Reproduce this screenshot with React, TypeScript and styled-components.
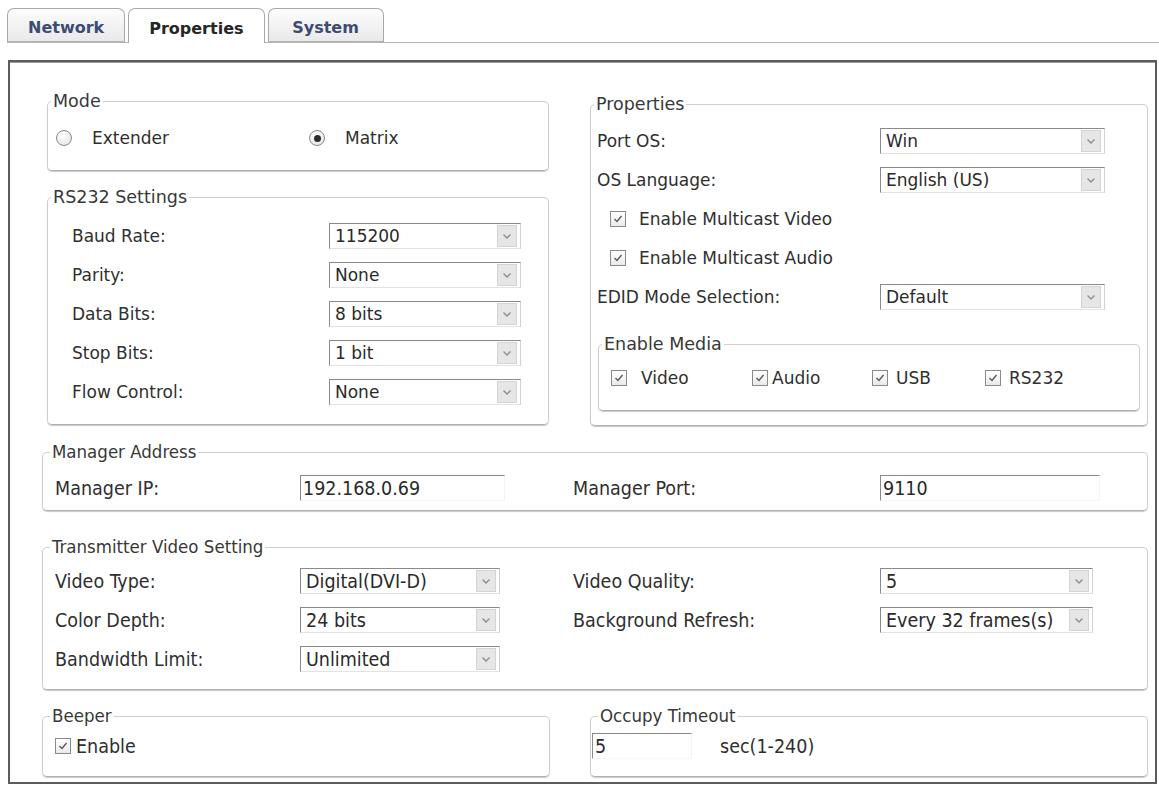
import styled, { createGlobalStyle } from 'styled-components';

const GlobalStyle = createGlobalStyle`
  html, body {
    margin: 0;
    background: #ffffff;
  }
  body {
    font-family: "DejaVu Sans", Verdana, sans-serif;
    color: #2f2f2f;
  }
`;

const Chevron = () => (
  <svg width="10" height="7" viewBox="0 0 10 7">
    <polyline points="1.5,1.5 5,5 8.5,1.5" fill="none" stroke="#8c8c8c" strokeWidth="1.3" />
  </svg>
);

const Check = () => (
  <svg width="12" height="12" viewBox="0 0 12 12">
    <polyline points="2.5,6 5,8.5 9.5,3" fill="none" stroke="#5a5a5a" strokeWidth="1.4" />
  </svg>
);

const Dropdown = ({ value, width }: { value: string; width: number }) => (
  <SelectBox $w={width}>
    <SelectValue>{value}</SelectValue>
    <SelectArrow>
      <Chevron />
    </SelectArrow>
  </SelectBox>
);

const CheckItem = ({ label, gap = 14 }: { label: string; gap?: number }) => (
  <CheckLabel $gap={gap}>
    <CheckBox>
      <Check />
    </CheckBox>
    {label}
  </CheckLabel>
);

const App = () => {
  return (
    <>
      <GlobalStyle />
      <TabBar>
        <Tab>Network</Tab>
        <Tab $active>Properties</Tab>
        <Tab>System</Tab>
      </TabBar>

      <Panel>
        <TopRow>
          <Column>
            <Group>
              <Legend>Mode</Legend>
              <ModeBody>
                <RadioLabel>
                  <Radio />
                  Extender
                </RadioLabel>
                <RadioLabel>
                  <Radio $checked />
                  Matrix
                </RadioLabel>
              </ModeBody>
            </Group>

            <Group $mt={16}>
              <Legend>RS232 Settings</Legend>
              <SerialBody>
                <Label>Baud Rate:</Label>
                <Dropdown value="115200" width={192} />
                <Label>Parity:</Label>
                <Dropdown value="None" width={192} />
                <Label>Data Bits:</Label>
                <Dropdown value="8 bits" width={192} />
                <Label>Stop Bits:</Label>
                <Dropdown value="1 bit" width={192} />
                <Label>Flow Control:</Label>
                <Dropdown value="None" width={192} />
              </SerialBody>
            </Group>
          </Column>

          <Group $mt={3}>
            <Legend>Properties</Legend>
            <PropsBody>
              <FieldRow>
                <Label>Port OS:</Label>
                <Dropdown value="Win" width={225} />
              </FieldRow>
              <FieldRow>
                <Label>OS Language:</Label>
                <Dropdown value="English (US)" width={225} />
              </FieldRow>
              <CheckRow>
                <CheckItem label="Enable Multicast Video" gap={13} />
              </CheckRow>
              <CheckRow>
                <CheckItem label="Enable Multicast Audio" gap={13} />
              </CheckRow>
              <FieldRow>
                <Label>EDID Mode Selection:</Label>
                <Dropdown value="Default" width={225} />
              </FieldRow>
              <MediaGroup>
                <Legend>Enable Media</Legend>
                <MediaBody>
                  <CheckItem label="Video" gap={14} />
                  <CheckItem label="Audio" gap={4} />
                  <CheckItem label="USB" gap={8} />
                  <CheckItem label="RS232" gap={8} />
                </MediaBody>
              </MediaGroup>
            </PropsBody>
          </Group>
        </TopRow>

        <Lower>
          <Group $mt={16}>
            <Legend $narrow>Manager Address</Legend>
            <ManagerBody>
              <Label>Manager IP:</Label>
              <TextField $w={205}>192.168.0.69</TextField>
              <Label>Manager Port:</Label>
              <TextField $w={220}>9110</TextField>
            </ManagerBody>
          </Group>

          <Group $mt={26}>
            <Legend $narrow>Transmitter Video Setting</Legend>
            <VideoBody>
              <Label>Video Type:</Label>
              <Dropdown value="Digital(DVI-D)" width={200} />
              <Label>Video Quality:</Label>
              <Dropdown value="5" width={213} />
              <Label>Color Depth:</Label>
              <Dropdown value="24 bits" width={200} />
              <Label>Background Refresh:</Label>
              <Dropdown value="Every 32 frames(s)" width={213} />
              <Label>Bandwidth Limit:</Label>
              <Dropdown value="Unlimited" width={200} />
            </VideoBody>
          </Group>

          <BottomRow>
            <Group>
              <Legend $narrow>Beeper</Legend>
              <BeeperBody>
                <CheckItem label="Enable" gap={5} />
              </BeeperBody>
            </Group>
            <Group>
              <Legend $narrow>Occupy Timeout</Legend>
              <TimeoutBody>
                <TextField $w={100}>5</TextField>
                <span>sec(1-240)</span>
              </TimeoutBody>
            </Group>
          </BottomRow>
        </Lower>
      </Panel>
    </>
  );
};

export default App;

const TabBar = styled.div`
  display: flex;
  align-items: flex-end;
  gap: 3px;
  height: 34px;
  margin: 8px 0 0 7px;
  border-bottom: 1px solid #b4b4b4;
`;

const Tab = styled.div<{ $active?: boolean }>`
  display: flex;
  align-items: center;
  justify-content: center;
  box-sizing: border-box;
  height: ${(p) => (p.$active ? '35px' : '34px')};
  margin-bottom: ${(p) => (p.$active ? '-1px' : '0')};
  padding: 4px 20px 0;
  min-width: 116px;
  border: 1px solid #a8a8a8;
  border-bottom: ${(p) => (p.$active ? 'none' : '1px solid #b4b4b4')};
  border-radius: 7px 7px 0 0;
  background: ${(p) => (p.$active ? '#ffffff' : 'linear-gradient(#fdfdfd, #e9e9e9)')};
  color: ${(p) => (p.$active ? '#262626' : '#3d4c72')};
  font-size: 16px;
  font-weight: 700;
`;

const Panel = styled.div`
  margin: 17px 2px 0 8px;
  padding: 29px 7px 5px 32px;
  border: 2px solid #5c5c5c;
  box-shadow: inset 0 1px 0 #9a9a9a;
`;

const TopRow = styled.div`
  display: grid;
  grid-template-columns: 502px 1fr;
  column-gap: 41px;
  align-items: start;
  margin-left: 5px;
  font-size: 17px;
`;

const Column = styled.div`
  display: flex;
  flex-direction: column;
`;

const Group = styled.fieldset<{ $mt?: number }>`
  margin: ${(p) => p.$mt ?? 0}px 0 0;
  padding: 0;
  min-width: 0;
  border: 1px solid #cfcfcf;
  border-bottom-color: #b0b0b0;
  border-radius: 5px;
  box-shadow: 0 1px 1px rgba(0, 0, 0, 0.22);
`;

const Legend = styled.legend<{ $narrow?: boolean }>`
  margin-left: ${(p) => (p.$narrow ? '7px' : '3px')};
  padding: 0 2px;
  line-height: 20px;
  color: #383838;
  font-size: ${(p) => (p.$narrow ? '18.5px' : '17.5px')};
  font-family: ${(p) =>
    p.$narrow ? '"DejaVu Sans Condensed", "DejaVu Sans", sans-serif' : 'inherit'};
  font-stretch: ${(p) => (p.$narrow ? 'condensed' : 'normal')};
`;

const Label = styled.span`
  display: flex;
  align-items: center;
  height: 26px;
  white-space: nowrap;
`;

const ModeBody = styled.div`
  display: grid;
  grid-template-columns: 253px 1fr;
  padding: 16px 0 21px 8px;
`;

const RadioLabel = styled.label`
  display: flex;
  align-items: center;
  gap: 20px;
  height: 22px;
`;

const Radio = styled.span<{ $checked?: boolean }>`
  position: relative;
  flex-shrink: 0;
  width: 16px;
  height: 16px;
  box-sizing: border-box;
  border: 1px solid #8a8a8a;
  border-radius: 50%;
  background: radial-gradient(circle at 40% 35%, #ffffff, #e0e0e0);

  &::after {
    content: '';
    display: ${(p) => (p.$checked ? 'block' : 'none')};
    position: absolute;
    inset: 3.5px;
    border-radius: 50%;
    background: #2b2b2b;
  }
`;

const SerialBody = styled.div`
  display: grid;
  grid-template-columns: 257px 192px;
  row-gap: 13px;
  padding: 16px 0 19px 24px;
`;

const SelectBox = styled.div<{ $w: number }>`
  display: flex;
  align-items: stretch;
  box-sizing: border-box;
  width: ${(p) => p.$w}px;
  height: 26px;
  border: 1px solid #d2d2d2;
  border-top-color: #8a8a8a;
  border-left-color: #8a8a8a;
  border-bottom-color: #e2e2e2;
  background: #ffffff;
`;

const SelectValue = styled.span`
  flex: 1;
  display: flex;
  align-items: center;
  padding-left: 5px;
  overflow: hidden;
  white-space: nowrap;
  color: #2a2a2a;
`;

const SelectArrow = styled.span`
  display: flex;
  align-items: center;
  justify-content: center;
  width: 18px;
  margin: 1px 3px 1px 0;
  background: #e6e6e6;
  border: 1px solid #d4d4d4;
`;

const PropsBody = styled.div`
  display: flex;
  flex-direction: column;
  gap: 13px;
  padding: 14px 0 14px 6px;
`;

const FieldRow = styled.div`
  display: grid;
  grid-template-columns: 283px 225px;
`;

const CheckRow = styled.div`
  display: flex;
  align-items: center;
  height: 26px;
  padding-left: 13px;
`;

const CheckLabel = styled.label<{ $gap: number }>`
  display: flex;
  align-items: center;
  gap: ${(p) => p.$gap}px;
  height: 22px;
  white-space: nowrap;
`;

const CheckBox = styled.span`
  display: flex;
  align-items: center;
  justify-content: center;
  flex-shrink: 0;
  box-sizing: border-box;
  width: 16px;
  height: 16px;
  border: 1px solid #8a8a8a;
  background: linear-gradient(#ffffff, #eaeaea);
`;

const MediaGroup = styled(Group)`
  margin: 11px 7px 0 1px;
`;

const MediaBody = styled.div`
  display: grid;
  grid-template-columns: 141px 120px 113px auto;
  padding: 13px 0 21px 12px;
`;

const Lower = styled.div`
  display: flex;
  flex-direction: column;
  font-family: "DejaVu Sans Condensed", "DejaVu Sans", sans-serif;
  font-stretch: condensed;
  font-size: 19.5px;
`;

const ManagerBody = styled.div`
  display: grid;
  grid-template-columns: 245px 273px 307px 220px;
  padding: 13px 0 9px 12px;
`;

const TextField = styled.div<{ $w: number }>`
  display: flex;
  align-items: center;
  box-sizing: border-box;
  width: ${(p) => p.$w}px;
  height: 26px;
  padding-left: 2px;
  border-top: 1px solid #8a8a8a;
  border-left: 1px solid #8a8a8a;
  border-right: 1px solid #f4f4f4;
  border-bottom: 1px solid #f6f6f6;
  color: #2a2a2a;
`;

const VideoBody = styled.div`
  display: grid;
  grid-template-columns: 245px 273px 307px 213px;
  row-gap: 13px;
  padding: 11px 0 17px 12px;
`;

const BottomRow = styled.div`
  display: grid;
  grid-template-columns: 508px 1fr;
  column-gap: 40px;
  margin-top: 16px;
`;

const BeeperBody = styled.div`
  display: flex;
  align-items: center;
  padding: 9px 0 17px 12px;
`;

const TimeoutBody = styled.div`
  display: flex;
  align-items: center;
  gap: 28px;
  height: 26px;
  padding: 7px 0 17px 1px;
`;
